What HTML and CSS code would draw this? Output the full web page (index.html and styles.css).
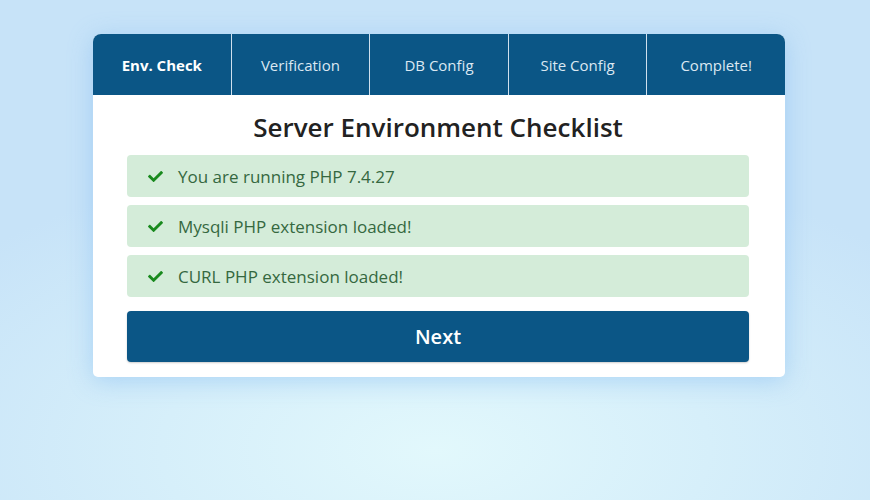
FILE: index.html
```html
<!DOCTYPE html>
<html>
<head>
<meta charset="utf-8">
<link rel="stylesheet" href="styles.css">
</head>
<body>
<div class="card">
  <nav class="tabs">
    <div class="tab active">Env. Check</div>
    <div class="tab">Verification</div>
    <div class="tab">DB Config</div>
    <div class="tab">Site Config</div>
    <div class="tab">Complete!</div>
  </nav>
  <div class="content">
    <h1 class="title">Server Environment Checklist</h1>
    <div class="alert"><svg class="check" viewBox="0 0 512 512"><path d="M173.898 439.404l-166.4-166.4c-9.997-9.997-9.997-26.206 0-36.204l36.203-36.204c9.997-9.998 26.207-9.998 36.204 0L192 312.690 432.095 72.596c9.997-9.997 26.207-9.997 36.204 0l36.203 36.204c9.997 9.997 9.997 26.206 0 36.204l-294.4 294.401c-9.998 9.997-26.207 9.997-36.204-.001z"/></svg><span>You are running PHP 7.4.27</span></div>
    <div class="alert"><svg class="check" viewBox="0 0 512 512"><path d="M173.898 439.404l-166.4-166.4c-9.997-9.997-9.997-26.206 0-36.204l36.203-36.204c9.997-9.998 26.207-9.998 36.204 0L192 312.690 432.095 72.596c9.997-9.997 26.207-9.997 36.204 0l36.203 36.204c9.997 9.997 9.997 26.206 0 36.204l-294.4 294.401c-9.998 9.997-26.207 9.997-36.204-.001z"/></svg><span>Mysqli PHP extension loaded!</span></div>
    <div class="alert"><svg class="check" viewBox="0 0 512 512"><path d="M173.898 439.404l-166.4-166.4c-9.997-9.997-9.997-26.206 0-36.204l36.203-36.204c9.997-9.998 26.207-9.998 36.204 0L192 312.690 432.095 72.596c9.997-9.997 26.207-9.997 36.204 0l36.203 36.204c9.997 9.997 9.997 26.206 0 36.204l-294.4 294.401c-9.998 9.997-26.207 9.997-36.204-.001z"/></svg><span>CURL PHP extension loaded!</span></div>
    <button class="next">Next</button>
  </div>
</div>
</body>
</html>
```
FILE: styles.css
```css
html, body {
  margin: 0;
  height: 100%;
}
body {
  font-family: "Open Sans", "Noto Sans", sans-serif;
  background: radial-gradient(ellipse 70% 60% at 50% 90%, #e2f8fc 0%, #d6effa 45%, #c7e3f8 100%);
  padding-top: 34px;
  box-sizing: border-box;
}
.card {
  width: 692px;
  margin-left: 93px;
  background: #fff;
  border-radius: 8px 8px 5px 5px;
  box-shadow: 0 4px 24px rgba(120, 180, 240, 0.45);
}
.tabs {
  display: flex;
  height: 61px;
  background: #0b5686;
  border-radius: 8px 8px 0 0;
  overflow: hidden;
}
.tab {
  flex: 1;
  display: flex;
  align-items: center;
  justify-content: center;
  color: #dbe8f2;
  font-size: 15px;
  border-left: 1px solid #cfe0ee;
}
.tab:first-child { border-left: none; }
.tab.active {
  font-weight: 700;
  color: #fff;
}
.content {
  padding: 14px 36px 15px 34px;
  display: flex;
  flex-direction: column;
  gap: 8px;
}
.title {
  margin: 0;
  text-align: center;
  font-size: 26px;
  font-weight: 600;
  color: #222;
  line-height: 37px;
  margin-bottom: 1px;
}
.alert {
  display: flex;
  align-items: center;
  height: 42px;
  padding: 0 20px;
  background: #d4ecd9;
  border-radius: 4px;
  color: #35683f;
  font-size: 17px;
}
.check {
  width: 17px;
  height: 15px;
  fill: #198a1e;
  margin-right: 14px;
}
.next {
  margin-top: 6px;
  height: 51px;
  border: none;
  border-radius: 4px;
  background: #0b5686;
  color: #fff;
  font-family: inherit;
  font-size: 20px;
  font-weight: 600;
  box-shadow: 0 1px 2px rgba(0,0,0,0.2);
}
```
